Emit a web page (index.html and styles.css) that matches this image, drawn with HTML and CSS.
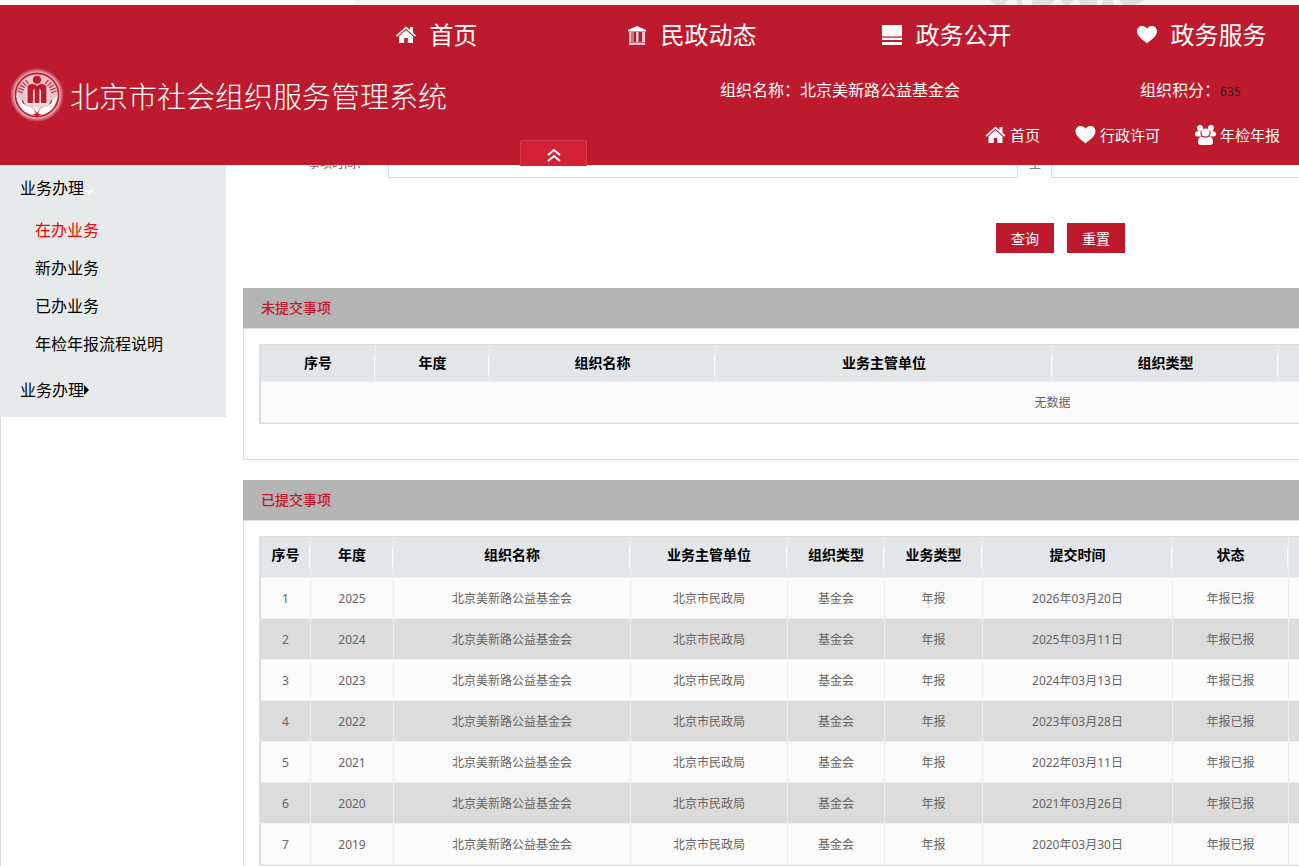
FILE: index.html
```html
<!DOCTYPE html>
<html lang="zh-CN">
<head>
  <meta charset="utf-8">
  <title>北京市社会组织服务管理系统</title>
  <link rel="stylesheet" href="styles.css">
</head>
<body>
  <!-- shared icons -->
  <svg class="sprite" aria-hidden="true">
    <symbol id="home" viewBox="0 0 20 20">
      <path d="M10 1.500 0 10.500l1 1.200L10 3.800l9 7.900 1-1.200-3-2.700V2h-3v3.100z"/>
      <path d="M10 5.200 3 11.300V18h5.200v-5h3.600v5H17v-6.700z"/>
    </symbol>
    <symbol id="heart" viewBox="0 0 20 20">
      <path d="M10 18.500C7 15.500 0 11.500 0 6.500 0 3 2.500 1 5.200 1 7.300 1 9 2 10 3.800 11 2 12.700 1 14.800 1 17.500 1 20 3 20 6.500c0 5-7 9-10 12z"/>
    </symbol>
  </svg>

  <div class="strip">
    <svg width="170" height="5" viewBox="0 0 170 5">
      <path d="M5 0h18l-4 5h-8zM32 0h5v5h-5zM48 0h22l-5 5H46zM76 0h12l-3 5h-6zM94 0h18v5H96zM118 0h9l2 5h-12zM134 0h26l-10 5h-12z" fill="#e0e0e0"/>
    </svg>
  </div>

  <header class="header">
    <nav>
      <ul class="nav">
        <li><a href="#"><svg class="nav-icon"><use href="#home"/></svg>首页</a></li>
        <li><a href="#"><svg class="nav-icon" viewBox="0 0 20 20"><path d="M10 1 1 5v1.500h18V5z"/><path d="M2 7h2.500v10H2zM5.500 7h1v10h-1zM9 7h2.500v10H9zM15 7h3v10h-3zM2 17.500h16V20H2z" opacity=".75"/></svg>民政动态</a></li>
        <li><a href="#"><svg class="nav-icon" viewBox="0 0 20 20"><path d="M0 0h20v11H0z"/><path d="M0 11h20v1.500H0z" opacity=".5"/><path d="M0 13h20v2H0zM0 17h20v3H0z"/></svg>政务公开</a></li>
        <li><a href="#"><svg class="nav-icon"><use href="#heart"/></svg>政务服务</a></li>
      </ul>
    </nav>

    <div class="header-main">
      <div class="brand">
        <svg class="emblem" viewBox="0 0 160 160">
          <defs>
            <radialGradient id="glow">
              <stop offset="0.800" stop-color="#fff" stop-opacity="0.850"/>
              <stop offset="0.900" stop-color="#fff" stop-opacity="0.400"/>
              <stop offset="1" stop-color="#fff" stop-opacity="0"/>
            </radialGradient>
          </defs>
          <circle cx="80" cy="80" r="80" fill="url(#glow)"/>
          <circle cx="80" cy="80" r="64" fill="#efc4c9" stroke="#bd1a2d" stroke-width="5"/>
          <!-- cupped hands -->
          <path d="M19 80c2 26 20 48 46 57l-2-15c-12-4-22-8-27-16zM141 80c-2 26-20 48-46 57l2-15c12-4 22-8 27-16z" fill="#fff"/>
          <path d="M36 92l8 16 18 8 18 16 18-16 18-8 8-16v18c-4 12-16 20-28 24l-16 10-16-10c-12-4-24-12-28-24z" fill="#bd1a2d"/>
          <path d="M28 82c2 14 10 26 24 30 12 4 22 10 24 24-18 2-40-8-48-26zM132 82c-2 14-10 26-24 30-12 4-22 10-24 24 18 2 40-8 48-26z" fill="#fff"/>
          <!-- person holding a book -->
          <path d="M46 56h68v54H46z" fill="#f6dfe1"/>
          <circle cx="80" cy="35" r="12" fill="#bd1a2d"/>
          <path d="M52 54c8-8 20-9 28 0 8-9 20-8 28 0v50H92V66l-5-4v42H73V62l-5 4v38H52z" fill="#bd1a2d"/>
          <path d="M70 112l10 5 10-5-10 22z" fill="#fff"/>
          <path d="M22 68l16 6M25 59l16 7M30 50l14 9M37 42l12 11M46 35l9 13M138 68l-16 6M135 59l-16 7M130 50l-14 9M123 42l-12 11M114 35l-9 13" stroke="#c93a4a" stroke-width="4"/>
        </svg>
        <span class="brand-name">北京市社会组织服务管理系统</span>
      </div>

      <div class="account">
        <div class="org">
          <span class="org-name">组织名称：北京美新路公益基金会</span>
          <span>组织积分：<span class="score">635</span></span>
        </div>
        <div class="links">
          <a href="#"><svg class="link-icon"><use href="#home"/></svg>首页</a>
          <a href="#"><svg class="link-icon"><use href="#heart"/></svg>行政许可</a>
          <a href="#"><svg class="link-icon" viewBox="0 0 21 20"><circle cx="5" cy="3" r="3"/><circle cx="16" cy="3" r="3"/><path d="M0 9c0-2.500 2-3.500 5.800-3-.8 2-.3 4 1 5.500H2c-1.500 0-2-1-2-2.500zM21 9c0-2.500-2-3.500-5.800-3 .8 2 .3 4-1 5.500H19c1.500 0 2-1 2-2.500z"/><circle cx="10.500" cy="7.500" r="4"/><path d="M3 17c0-3.500 1.300-5.300 4-5.300 2.300 1.400 4.700 1.400 7 0 2.700 0 4 1.800 4 5.300 0 2-1 3-3 3H6c-2 0-3-1-3-3z"/></svg>年检年报</a>
        </div>
      </div>
    </div>

    <button type="button" class="toggle" aria-label="收起">
      <svg width="14" height="14" viewBox="0 0 14 14"><path d="M1 7l6-5 6 5M1 13l6-5 6 5" fill="none" stroke="#fff" stroke-width="2"/></svg>
    </button>
  </header>

  <div class="layout">
    <aside class="side">
      <div class="menu">
        <a class="menu-title" href="#">业务办理<span class="caret-down"></span></a>
        <ul>
          <li><a class="active" href="#">在办业务</a></li>
          <li><a href="#">新办业务</a></li>
          <li><a href="#">已办业务</a></li>
          <li><a href="#">年检年报流程说明</a></li>
        </ul>
        <a class="menu-title" href="#">业务办理<span class="caret-right"></span></a>
      </div>
    </aside>

    <main class="main">
      <form class="search">
        <div class="search-row">
          <label for="start">事项时间：</label>
          <input type="text" id="start">
          <label class="to" for="end">至</label>
          <input type="text" id="end">
        </div>
        <div class="search-buttons">
          <button type="button">查询</button>
          <button type="reset">重置</button>
        </div>
      </form>

      <section class="panel">
        <h2>未提交事项</h2>
        <div class="panel-body">
          <table class="list pending">
            <thead>
              <tr>
                <th class="w115">序号</th>
                <th class="w114">年度</th>
                <th class="w226">组织名称</th>
                <th class="w337">业务主管单位</th>
                <th class="w226">组织类型</th>
                <th></th>
              </tr>
            </thead>
            <tbody>
              <tr><td colspan="6">无数据</td></tr>
            </tbody>
          </table>
        </div>
      </section>

      <section class="panel">
        <h2>已提交事项</h2>
        <div class="panel-body">
          <table class="list submitted">
            <thead>
              <tr>
                <th class="w50">序号</th>
                <th class="w83">年度</th>
                <th class="w237">组织名称</th>
                <th class="w157">业务主管单位</th>
                <th class="w97">组织类型</th>
                <th class="w98">业务类型</th>
                <th class="w190">提交时间</th>
                <th class="w116">状态</th>
                <th></th>
              </tr>
            </thead>
            <tbody>
              <tr><td>1</td><td>2025</td><td>北京美新路公益基金会</td><td>北京市民政局</td><td>基金会</td><td>年报</td><td>2026年03月20日</td><td>年报已报</td><td></td></tr>
              <tr><td>2</td><td>2024</td><td>北京美新路公益基金会</td><td>北京市民政局</td><td>基金会</td><td>年报</td><td>2025年03月11日</td><td>年报已报</td><td></td></tr>
              <tr><td>3</td><td>2023</td><td>北京美新路公益基金会</td><td>北京市民政局</td><td>基金会</td><td>年报</td><td>2024年03月13日</td><td>年报已报</td><td></td></tr>
              <tr><td>4</td><td>2022</td><td>北京美新路公益基金会</td><td>北京市民政局</td><td>基金会</td><td>年报</td><td>2023年03月28日</td><td>年报已报</td><td></td></tr>
              <tr><td>5</td><td>2021</td><td>北京美新路公益基金会</td><td>北京市民政局</td><td>基金会</td><td>年报</td><td>2022年03月11日</td><td>年报已报</td><td></td></tr>
              <tr><td>6</td><td>2020</td><td>北京美新路公益基金会</td><td>北京市民政局</td><td>基金会</td><td>年报</td><td>2021年03月26日</td><td>年报已报</td><td></td></tr>
              <tr><td>7</td><td>2019</td><td>北京美新路公益基金会</td><td>北京市民政局</td><td>基金会</td><td>年报</td><td>2020年03月30日</td><td>年报已报</td><td></td></tr>
            </tbody>
          </table>
        </div>
      </section>
    </main>
  </div>
</body>
</html>
```

FILE: styles.css
```css
* {
  box-sizing: border-box;
}

body {
  margin: 0;
  height: 100vh;
  overflow: hidden;
  font-family: "Noto Sans", "Noto Sans CJK SC", sans-serif;
  font-size: 12px;
  color: #666;
  background-color: #fff;
}

ul {
  list-style: none;
  margin: 0;
  padding: 0;
}

a {
  color: inherit;
  text-decoration: none;
}

button {
  font-family: inherit;
  cursor: pointer;
}

.sprite {
  display: none;
}

/* banner strip above the header */
.strip {
  display: flex;
  justify-content: flex-end;
  height: 5px;
  margin-left: 353px;
  padding-right: 144px;
  background-color: #f4f5f5;
}

/* header */
.header {
  position: relative;
  z-index: 1;
  padding-bottom: 10px;
  background-color: #bd1a2d;
  color: #fff;
}

.header svg {
  fill: #fff;
}

.nav {
  display: flex;
  margin-left: 309px;
}

.nav li {
  flex: 0 0 255px;
}

.nav a {
  display: flex;
  align-items: center;
  justify-content: center;
  gap: 14px;
  font-size: 24px;
  line-height: 60px;
}

.nav-icon {
  width: 20px;
  height: 20px;
}

.header-main {
  display: flex;
  padding-left: 10px;
}

.brand {
  display: flex;
  flex: 0 0 710px;
  align-items: center;
  gap: 6px;
  height: 60px;
}

.emblem {
  width: 54px;
  height: 54px;
}

.brand-name {
  font-size: 29px;
  font-weight: 300;
}

.org {
  display: flex;
  height: 50px;
  font-size: 16px;
  line-height: 50px;
  white-space: nowrap;
}

.org-name {
  width: 420px;
}

.score {
  font-size: 12px;
  color: #222;
}

.links {
  display: flex;
  gap: 35px;
  padding-left: 265px;
  font-size: 15px;
  line-height: 40px;
  white-space: nowrap;
}

.links a {
  display: flex;
  align-items: center;
  gap: 4px;
}

.link-icon {
  width: 21px;
  height: 20px;
}

.toggle {
  position: absolute;
  left: 520px;
  bottom: -1px;
  display: flex;
  align-items: center;
  justify-content: center;
  width: 67px;
  height: 26px;
  padding: 2px 0 0;
  border: 1px solid #d93a48;
  border-bottom: 0;
  border-radius: 2px 2px 0 0;
  background-color: #d32236;
}

/* page columns */
.layout {
  display: flex;
  align-items: stretch;
  min-width: 1879px;
}

.side {
  flex: 0 0 226px;
  background: linear-gradient(#ddd, #ddd) no-repeat left top / 1px 100%;
}

.menu {
  padding-bottom: 4px;
  background-color: #e6eaea;
  color: #000;
  font-size: 16px;
}

.menu ul {
  margin-bottom: 4px;
}

.menu li {
  padding-left: 35px;
  line-height: 38px;
}

.menu .active {
  color: #f00;
}

.menu-title {
  display: flex;
  align-items: center;
  padding-left: 20px;
  line-height: 46px;
}

.caret-down {
  margin-top: 8px;
  border: 5px solid transparent;
  border-top-color: #fff;
  border-bottom: 0;
}

.caret-right {
  border: 5px solid transparent;
  border-left-color: #000;
  border-right: 0;
}

.main {
  flex: 1;
  padding: 0 17px;
}

/* search form, its first row runs under the header */
.search {
  margin-top: -17px;
  padding-bottom: 35px;
}

.search-row {
  display: flex;
  align-items: center;
}

.search-row label {
  width: 145px;
  padding-left: 65px;
}

.search-row .to {
  width: 33px;
  padding-left: 11px;
}

.search-row input {
  width: 630px;
  height: 30px;
  border: 1px solid #ddd;
}

.search-buttons {
  display: flex;
  justify-content: center;
  gap: 13px;
  padding: 45px 0 0 16px;
}

.search-buttons button {
  width: 58px;
  height: 30px;
  padding: 0;
  border: 0;
  background-color: #bd1a2d;
  color: #fff;
  font-size: 14px;
}

/* panels */
.panel {
  margin-bottom: 20px;
}

.panel h2 {
  margin: 0;
  padding-left: 18px;
  background-color: #b4b4b4;
  color: #bd1a2d;
  font-size: 14px;
  font-weight: 500;
  line-height: 40px;
}

.panel-body {
  padding: 15px 15px 35px;
  border: 1px solid #ddd;
}

.list {
  width: 100%;
  table-layout: fixed;
  border: 1px solid #ddd;
  border-left-width: 2px;
  border-collapse: separate;
  border-spacing: 0;
}

.list th,
.list td {
  padding: 0;
  border-right: 1px solid #eee;
  border-bottom: 1px solid #eee;
  text-align: center;
}

/* short white divider at the right of each heading */
.list th {
  background: #e2e6e9 linear-gradient(#fff, #fff) no-repeat right 10px / 1px 20px;
  color: #000;
  font-size: 14px;
  line-height: 36px;
  vertical-align: top;
}

.submitted th {
  height: 41px;
}

.list td {
  height: 41px;
  background-color: #fbfbfb;
}

.list tr:nth-child(even) td {
  background-color: #dcdcdc;
}

.w50 { width: 50px; }
.w83 { width: 83px; }
.w97 { width: 97px; }
.w98 { width: 98px; }
.w114 { width: 114px; }
.w115 { width: 115px; }
.w116 { width: 116px; }
.w157 { width: 157px; }
.w190 { width: 190px; }
.w226 { width: 226px; }
.w237 { width: 237px; }
.w337 { width: 337px; }
```
